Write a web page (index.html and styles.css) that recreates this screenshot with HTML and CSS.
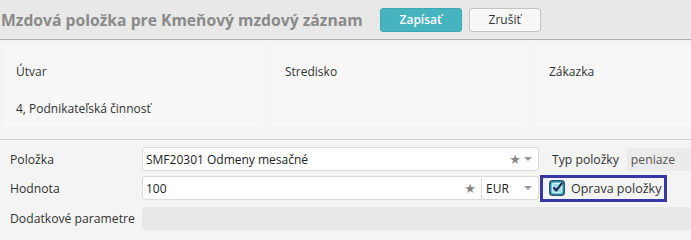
FILE: index.html
```html
<!DOCTYPE html>
<html lang="sk">
<head>
<meta charset="utf-8">
<title>Mzdová položka</title>
<link rel="stylesheet" href="styles.css">
</head>
<body>
<div class="header">
  <h1 class="title">Mzdová položka pre Kmeňový mzdový záznam</h1>
  <button class="btn btn-primary">Zapísať</button>
  <button class="btn btn-default">Zrušiť</button>
</div>
<div class="panels">
  <div class="panel">
    <div class="panel-label">Útvar</div>
    <div class="panel-value">4, Podnikateľská činnosť</div>
  </div>
  <div class="panel">
    <div class="panel-label">Stredisko</div>
  </div>
  <div class="panel">
    <div class="panel-label">Zákazka</div>
  </div>
</div>
<div class="divider"></div>
<div class="form">
  <div class="row row-1">
    <div class="label">Položka</div>
    <div class="input input-wide">
      <span class="input-text">SMF20301 Odmeny mesačné</span>
      <span class="star">★</span>
      <span class="caret"></span>
    </div>
    <div class="side-label">Typ položky</div>
    <div class="readonly">peniaze</div>
  </div>
  <div class="row row-2">
    <div class="label">Hodnota</div>
    <div class="input input-value">
      <span class="input-text">100</span>
      <span class="star">★</span>
    </div>
    <div class="input input-select">
      <span class="input-text">EUR</span>
      <span class="caret"></span>
    </div>
    <label class="check-box">
      <svg class="check-icon" width="16" height="16" viewBox="0 0 16 16">
        <rect x="0.75" y="0.75" width="14.5" height="14.5" rx="3" fill="#3fb3c6" stroke="#2a5476" stroke-width="1.5"/>
        <rect x="3.3" y="3.3" width="9.4" height="9.4" rx="1.2" fill="#9fdbe6" stroke="#eaf7fa" stroke-width="1"/>
        <path d="M5 8 L7.3 10.4 L12.8 3.4" fill="none" stroke="#1a2758" stroke-width="2.1" stroke-linecap="round" stroke-linejoin="round"/>
      </svg>
      <span class="check-text">Oprava položky</span>
    </label>
  </div>
  <div class="row row-3">
    <div class="label">Dodatkové parametre</div>
    <div class="params"></div>
  </div>
</div>
</body>
</html>
```

FILE: styles.css
```css
* { box-sizing: border-box; }
html, body {
  margin: 0;
  padding: 0;
  background: #f4f4f4;
  font-family: "Open Sans", "Noto Sans", sans-serif;
  color: #333;
  font-size: 12px;
  width: 691px;
  height: 237px;
  overflow: hidden;
}
.header {
  height: 40px;
  background: #e8e8e8;
  border-bottom: 1px solid #acacac;
  display: flex;
  align-items: center;
  padding-left: 1px;
}
.title {
  margin: 0;
  font-size: 15.7px;
  font-weight: 700;
  color: #8a8a8a;
  white-space: nowrap;
}
.btn {
  height: 24px;
  border-radius: 3px;
  font-family: inherit;
  font-size: 12px;
  padding: 0;
}
.btn-primary {
  margin-left: 17px;
  width: 82px;
  background: #46b4bf;
  border: 1px solid #3fa9b3;
  color: #fff;
  font-weight: 600;
}
.btn-default {
  margin-left: 7px;
  width: 72px;
  background: #f8f8f8;
  border: 1px solid #c4c4c4;
  color: #333;
}
.panels {
  display: grid;
  grid-template-columns: 261px 256px 1fr;
  column-gap: 8px;
  margin: 5px 0 0 2px;
  height: 82px;
}
.panel {
  background: #f7f7f7;
  padding: 18px 14px 0 14px;
  font-size: 12px;
}
.panel-label { height: 37px; }
.divider {
  height: 1px;
  background: #d0d0d0;
  margin-top: 12px;
}
.form { padding-top: 7px; }
.row {
  display: flex;
  align-items: center;
  height: 24px;
}
.row-2 { margin-top: 5px; }
.row-3 { margin-top: 7px; height: 23px; }
.label {
  width: 142px;
  padding-left: 10px;
  font-size: 12.2px;
  color: #333;
  white-space: nowrap;
}
.input {
  height: 24px;
  background: #fff;
  border: 1px solid #dcdcdc;
  border-radius: 3px;
  display: flex;
  align-items: center;
  padding-left: 3px;
  font-size: 12px;
  color: #222;
}
.input-text { flex: 1; white-space: nowrap; }
.input-wide { width: 397px; padding-right: 4px; }
.input-value { width: 340px; border-radius: 3px 0 0 3px; padding-right: 5px; }
.input-select {
  width: 57px;
  border-left: none;
  border-radius: 0 3px 3px 0;
  padding-left: 4px;
  padding-right: 4px;
}
.star {
  color: #858585;
  font-size: 13px;
  line-height: 1;
  font-family: "DejaVu Sans", sans-serif;
}
.caret {
  width: 0;
  height: 0;
  border-left: 4px solid transparent;
  border-right: 4px solid transparent;
  border-top: 4px solid #9a9a9a;
  margin-left: 3px;
  margin-right: 2px;
}
.side-label {
  margin-left: 13px;
  font-size: 12.2px;
  color: #333;
  white-space: nowrap;
}
.readonly {
  margin-left: 8px;
  flex: 1;
  height: 23px;
  background: #ebebeb;
  display: flex;
  align-items: center;
  padding-left: 4px;
  color: #555;
  font-size: 12.2px;
}
.check-box {
  margin-left: 1px;
  width: 127px;
  height: 27px;
  border: 3px solid #3737a8;
  display: flex;
  align-items: center;
  padding-left: 6px;
}
.check-icon { flex: none; }
.check-text {
  margin-left: 6px;
  font-size: 12.5px;
  color: #333;
  white-space: nowrap;
}
.params {
  flex: 1;
  height: 23px;
  background: #e8e8e8;
  border-radius: 3px 0 0 3px;
}
```
